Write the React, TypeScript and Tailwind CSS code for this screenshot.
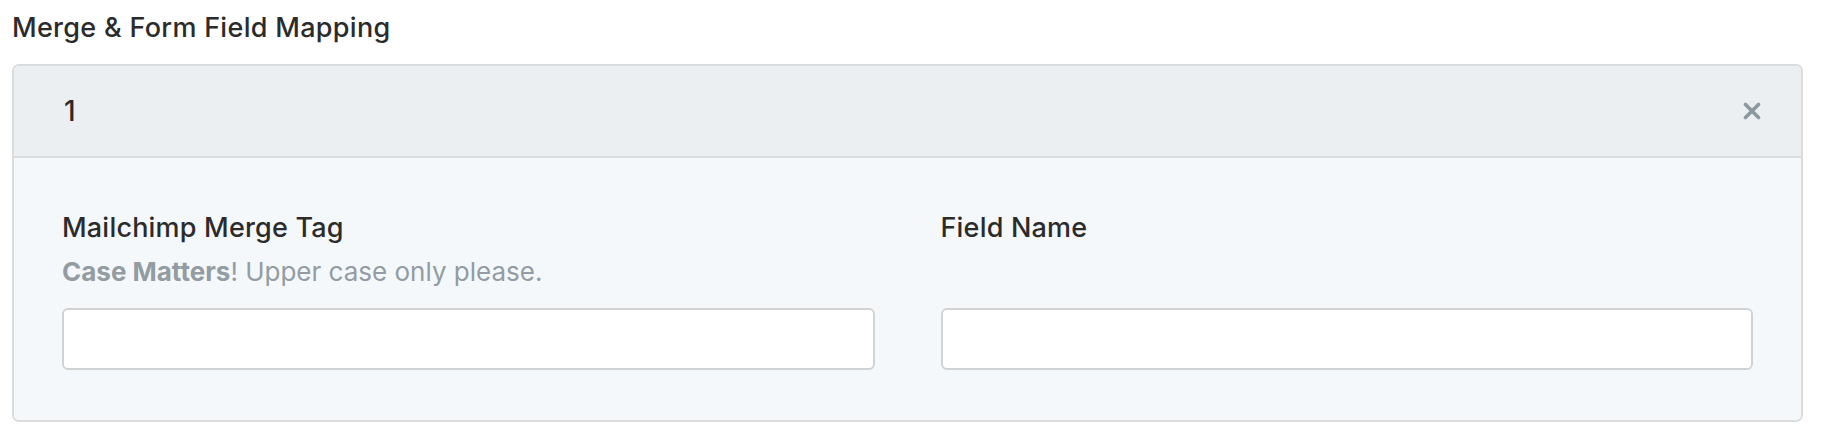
const FieldColumn = ({ label, help }: { label: string; help?: React.ReactNode }) => {
  return (
    <div className="flex flex-col">
      <label className="text-[27px] leading-[39px] font-medium tracking-[0.2px] text-[#2b2b2b]">{label}</label>
      <div className="mt-[7px] h-[36px] text-[26px] leading-[36px] text-[#929ca2]">{help}</div>
      <input
        type="text"
        className="mt-[18px] h-[62px] w-full rounded-[6px] border-2 border-[#d2d2d2] bg-white px-4 text-[24px] outline-none"
      />
    </div>
  );
};

export default function App() {
  return (
    <div className="min-h-screen bg-white px-[12px] pt-[8px] font-['Inter',sans-serif] text-[#2b2b2b]">
      <h2 className="text-[27px] leading-[39px] font-medium tracking-[0.3px]">Merge &amp; Form Field Mapping</h2>

      <div className="mt-[17px] w-[1791px] overflow-hidden rounded-[7px] border-2 border-[#dadcdd]">
        <div className="flex h-[92px] items-center justify-between border-b-2 border-[#dadcdd] bg-[#eceff1] pr-[40px] pl-[50px]">
          <span className="text-[28px] font-medium">1</span>
          <button className="text-[#8b989f]">
            <svg width="18" height="18" viewBox="0 0 18 18">
              <path d="M2.5 2.5 L15.5 15.5 M15.5 2.5 L2.5 15.5" stroke="currentColor" strokeWidth="3.6" strokeLinecap="round" />
            </svg>
          </button>
        </div>

        <div className="grid grid-cols-2 gap-[66px] bg-[#f5f8fa] px-[48px] pt-[50px] pb-[50px]">
          <FieldColumn
            label="Mailchimp Merge Tag"
            help={
              <>
                <strong className="font-bold">Case Matters</strong>! Upper case only please.
              </>
            }
          />
          <FieldColumn label="Field Name" />
        </div>
      </div>
    </div>
  );
}
